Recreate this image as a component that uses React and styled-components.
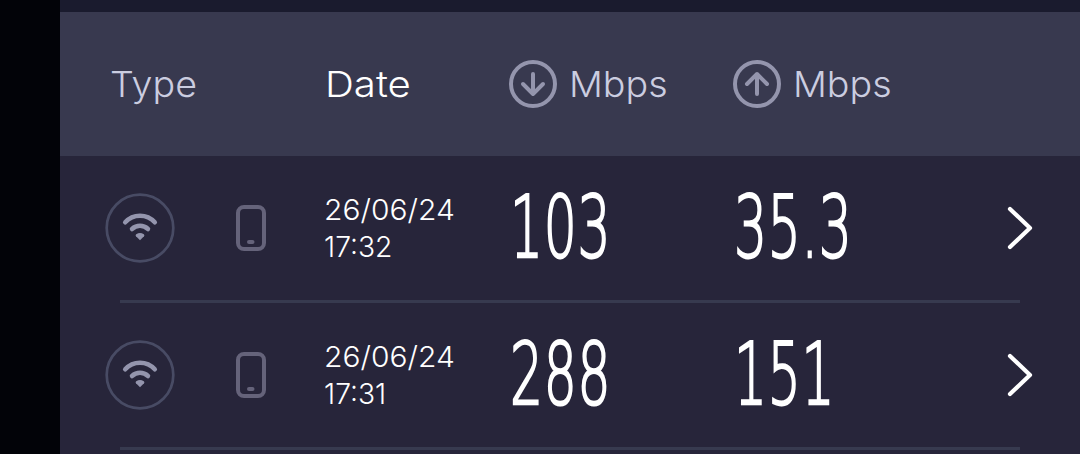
import styled, { createGlobalStyle } from 'styled-components';


const COLOR_TEXT = '#ffffff';
const COLOR_MUTED = '#cbcde0';
const COLOR_ICON = '#9495ad';
const COLOR_LINE = '#373a4f';


const GlobalStyle = createGlobalStyle`
    body {
        margin: 0;
        background: #27253a;
        overflow: hidden;
    }
`;
const Page = styled.div`
    display: flex;
    height: 454px;
    overflow: hidden;
    font-family: Inter, "Open Sans", sans-serif;
    color: ${COLOR_TEXT};
`;
const Side = styled.div`
    flex: 0 0 60px;
    background: #020308;
`;
const Results = styled.div`
    flex: 1;
    background: #27253a;
`;
const TopStrip = styled.div`
    height: 12px;
    background: #1a1b2e;
`;
const Row = styled.div`
    display: grid;
    grid-template-columns: 220px 184px 224px 1fr 26px;
    align-items: center;
    height: 144px;
    padding: 0 47px 0 45px;
    box-sizing: border-box;
`;
const HeaderRow = styled(Row)`
    background: #38394f;
`;
const Divider = styled.div`
    height: 3px;
    margin: 0 60px;
    background: ${COLOR_LINE};
`;
const Label = styled.span`
    width: max-content;
    font-size: 36px;
    font-weight: 320;
    line-height: 48px;
    margin-left: ${props => props.$indent || '0'};
    color: ${props => props.$active ? COLOR_TEXT : COLOR_MUTED};
    transform: scaleX(${props => props.$stretch || 1});
    transform-origin: left;
`;
const Unit = styled.div`
    display: flex;
    align-items: center;
    gap: 12px;
`;
const TypeIcons = styled.div`
    display: flex;
    align-items: center;
    gap: 60px;
`;
const Stamp = styled.div`
    margin-left: -1px;
    font-size: 29px;
    line-height: 37px;
    font-weight: 340;
`;
const StampLine = styled.div`
    width: max-content;
    transform: scaleX(${props => props.$stretch || 1});
    transform-origin: left;
`;
const Speed = styled.div`
    width: max-content;
    margin-left: 1px;
    font-family: "DejaVu Sans", sans-serif;
    font-size: 86px;
    font-weight: 200;
    line-height: 100px;
    letter-spacing: 1.2px;
    transform: scaleX(0.604);
    transform-origin: left;
    -webkit-text-stroke: 2.4px ${COLOR_TEXT};
    text-rendering: geometricPrecision;
`;
const Icon = styled.svg`
    display: block;
    flex: none;
    fill: none;
    stroke-linecap: round;
    stroke-linejoin: round;
`;


function ArrowIcon({ up }) {
    return (
        <Icon width="48" height="48" viewBox="0 0 48 48" stroke={COLOR_ICON} strokeWidth="4">
            <circle cx="24" cy="24" r="22" />
            <path d={up ? 'M24 34V14M14 24L24 14L34 24' : 'M24 14V34M14 24L24 34L34 24'} />
        </Icon>
    )
}

function WifiIcon() {
    return (
        <Icon width="70" height="70" viewBox="0 0 70 70">
            <circle cx="35" cy="35" r="33.3" stroke="#484b64" strokeWidth="2.7" />
            <g stroke={COLOR_ICON} strokeWidth="4.5">
                <path d="M20.2 29.3A20 20 0 0 1 49.8 29.3" />
                <path d="M27 36A11.8 11.8 0 0 1 43 36" />
            </g>
            <path
                d="M31.2 41.2Q35 39 38.8 41.2Q40 42.3 39 43.3L35 47.2L31 43.3Q30 42.3 31.2 41.2Z"
                fill={COLOR_ICON}
            />
        </Icon>
    )
}

function PhoneIcon() {
    return (
        <Icon width="32" height="48" viewBox="0 0 32 48" stroke="#65637a" strokeWidth="4">
            <rect x="3" y="3" width="26" height="42" rx="6" />
            <path d="M14 38H17.5" />
        </Icon>
    )
}

function ChevronIcon() {
    return (
        <Icon width="26" height="44" viewBox="0 0 26 44" stroke={COLOR_TEXT} strokeWidth="4.2">
            <path d="M3 3L23 22L3 41" />
        </Icon>
    )
}

const results = [
    { date: '26/06/24', time: '17:32', download: '103', upload: '35.3' },
    { date: '26/06/24', time: '17:31', download: '288', upload: '151' },
];

export default function App() {
    return (
        <Page>
            <GlobalStyle />
            <Side />
            <Results>
                <TopStrip />
                <HeaderRow>
                    <Label $indent="5px" $stretch={1.045}>Type</Label>
                    <Label $active $stretch={1.115}>Date</Label>
                    <Unit>
                        <ArrowIcon />
                        <Label $stretch={1.045}>Mbps</Label>
                    </Unit>
                    <Unit>
                        <ArrowIcon up />
                        <Label $stretch={1.045}>Mbps</Label>
                    </Unit>
                </HeaderRow>
                {results.map(item => (
                    <div key={item.time}>
                        <Row>
                            <TypeIcons>
                                <WifiIcon />
                                <PhoneIcon />
                            </TypeIcons>
                            <Stamp>
                                <StampLine $stretch={1.035}>{item.date}</StampLine>
                                <StampLine $stretch={0.975}>{item.time}</StampLine>
                            </Stamp>
                            <Speed>{item.download}</Speed>
                            <Speed>{item.upload}</Speed>
                            <ChevronIcon />
                        </Row>
                        <Divider />
                    </div>
                ))}
            </Results>
        </Page>
    )
}
